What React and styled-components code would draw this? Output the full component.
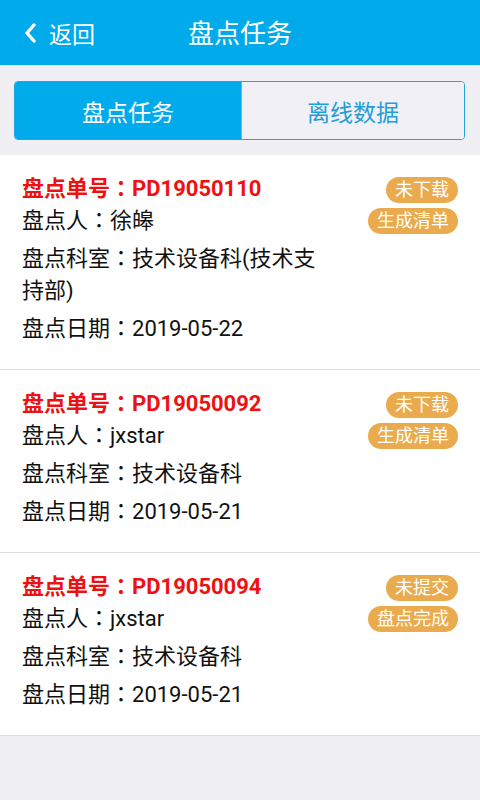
import React from 'react'
import styled, { createGlobalStyle } from 'styled-components'

const GlobalStyle = createGlobalStyle`
  html, body {
    margin: 0;
    padding: 0;
    background: #efeff4;
    font-family: Roboto, "Noto Sans CJK SC", sans-serif;
  }
`

const Page = styled.div`
  width: 480px;
  min-height: 800px;
  background: #efeff4;
`

const Header = styled.div`
  position: relative;
  height: 65px;
  background: #00aaeb;
  display: flex;
  align-items: center;
  justify-content: center;
  color: #fff;
`

const Back = styled.div`
  position: absolute;
  left: 24px;
  top: 0;
  bottom: 0;
  display: flex;
  align-items: center;
  gap: 13px;
  font-size: 23px;
`

const Title = styled.div`
  font-size: 26px;
  margin-top: -2px;
`

const TabsWrap = styled.div`
  padding: 16px 15px 15px 14px;
`

const Tabs = styled.div`
  display: flex;
  height: 57px;
  border: 1px solid #25a5df;
  border-radius: 4px;
  overflow: hidden;
`

const Tab = styled.div`
  display: flex;
  align-items: center;
  justify-content: center;
  font-size: 23px;
  width: ${p => (p.$active ? '226px' : 'auto')};
  flex: ${p => (p.$active ? 'none' : 1)};
  background: ${p => (p.$active ? '#00aaeb' : '#f0f0f6')};
  color: ${p => (p.$active ? '#fff' : '#1f9ed9')};
  border-right: ${p => (p.$active ? '1px solid #5bbfe8' : 'none')};
`

const Card = styled.div`
  display: flex;
  background: #fff;
  padding: 20px 22px 24px 22px;
  border-bottom: 1px solid #dcdcdc;
`

const Info = styled.div`
  flex: 1;
  min-width: 0;
  padding-right: 4px;
`

const OrderNo = styled.div`
  color: #ee1111;
  font-weight: bold;
  font-size: 22px;
  line-height: 28px;
`

const Line = styled.div`
  color: #111;
  font-size: 22px;
  line-height: 32px;
  margin-top: ${p => p.$gap}px;
`

const Colon = styled.span`
  font-family: "Noto Sans CJK TC", sans-serif;
  line-height: 0;
`

const Badges = styled.div`
  width: 130px;
  display: flex;
  flex-direction: column;
  align-items: flex-end;
  gap: 5px;
  margin-top: 2px;
`

const Badge = styled.div`
  background: #eaab4f;
  color: #fff;
  font-size: 18px;
  height: 26px;
  line-height: 26px;
  padding: 0 9px;
  border-radius: 13px;
`

const tasks = [
  { no: 'PD19050110', person: '徐皞', dept: '技术设备科(技术支持部)', date: '2019-05-22', badges: ['未下载', '生成清单'] },
  { no: 'PD19050092', person: 'jxstar', dept: '技术设备科', date: '2019-05-21', badges: ['未下载', '生成清单'] },
  { no: 'PD19050094', person: 'jxstar', dept: '技术设备科', date: '2019-05-21', badges: ['未提交', '盘点完成'] },
]

export default function App() {
  return (
    <Page>
      <GlobalStyle />
      <Header>
        <Back>
          <svg width="12" height="20" viewBox="0 0 12 20">
            <path d="M10 2 L3 10 L10 18" fill="none" stroke="#fff" strokeWidth="3.4" strokeLinecap="round" strokeLinejoin="round" />
          </svg>
          <span>返回</span>
        </Back>
        <Title>盘点任务</Title>
      </Header>
      <TabsWrap>
        <Tabs>
          <Tab $active>盘点任务</Tab>
          <Tab>离线数据</Tab>
        </Tabs>
      </TabsWrap>
      {tasks.map(t => (
        <Card key={t.no}>
          <Info>
            <OrderNo>盘点单号<Colon>：</Colon>{t.no}</OrderNo>
            <Line $gap={2}>盘点人<Colon>：</Colon>{t.person}</Line>
            <Line $gap={6}>盘点科室<Colon>：</Colon>{t.dept}</Line>
            <Line $gap={6}>盘点日期<Colon>：</Colon>{t.date}</Line>
          </Info>
          <Badges>
            {t.badges.map(b => (
              <Badge key={b}>{b}</Badge>
            ))}
          </Badges>
        </Card>
      ))}
    </Page>
  )
}
